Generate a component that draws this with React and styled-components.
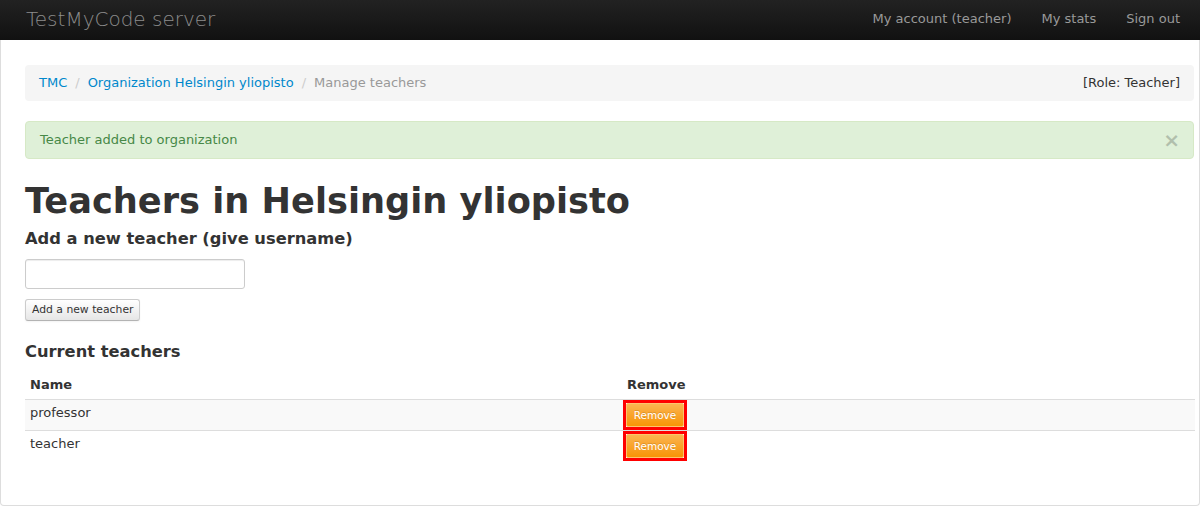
import styled, { createGlobalStyle } from "styled-components";

const GlobalStyle = createGlobalStyle`
    html, body {
        margin: 0;
        padding: 0;
        background: #fff;
    }
    body {
        font-family: "DejaVu Sans", "Liberation Sans", sans-serif;
        font-size: 13px;
        line-height: 18px;
        color: #333;
    }
`;

const NavBar = styled.div`
    height: 40px;
    box-sizing: border-box;
    padding: 0 20px 2px 26px;
    background: linear-gradient(to bottom, #222, #111);
    display: flex;
    align-items: center;
    justify-content: space-between;
`;
const Brand = styled.a`
    font-family: "DejaVu Sans ExtraLight", "DejaVu Sans Light", "DejaVu Sans", sans-serif;
    font-size: 20px;
    font-weight: 200;
    color: #8c8c8c;
    text-decoration: none;
`;
const NavLinks = styled.ul`
    display: flex;
    margin: 0;
    padding: 0;
    list-style: none;
    gap: 30px;
`;
const NavLink = styled.li`
    color: #999;
    font-size: 13px;
`;

const Container = styled.div`
    box-sizing: border-box;
    min-height: 466px;
    border: 1px solid #ddd;
    border-top: none;
    border-radius: 0 0 4px 4px;
    padding: 25px 5px 24px 24px;
`;

const Breadcrumb = styled.div`
    background: #f5f5f5;
    border-radius: 4px;
    padding: 8px 14px;
    line-height: 20px;
    display: flex;
    justify-content: space-between;
    margin-bottom: 20px;
`;
const Crumbs = styled.div`
    display: flex;
`;
const Crumb = styled.span`
    color: ${props => props.active ? "#999" : "#0088cc"};
`;
const Divider = styled.span`
    color: #ccc;
    padding: 0 8px;
`;
const Role = styled.span`
    color: #333;
`;

const Alert = styled.div`
    background: #dff0d8;
    border: 1px solid #d6e9c6;
    border-radius: 4px;
    color: #468847;
    padding: 8px 14px;
    line-height: 20px;
    display: flex;
    justify-content: space-between;
    align-items: center;
    margin-bottom: 17px;
`;
const Close = styled.span`
    color: #000;
    opacity: 0.2;
    font-size: 20px;
    font-weight: bold;
    line-height: 18px;
    margin-right: -1px;
`;

const Title = styled.h1`
    font-size: 35.2px;
    font-weight: bold;
    line-height: 50px;
    margin: 0 0 3px;
`;
const SubTitle = styled.h3`
    font-size: 16.3px;
    font-weight: bold;
    line-height: 20px;
    margin: ${props => props.margin};
`;
const Input = styled.input`
    display: block;
    box-sizing: border-box;
    width: 220px;
    height: 30px;
    border: 1px solid #ccc;
    border-radius: 3px;
    box-shadow: inset 0 1px 1px rgba(0, 0, 0, 0.075);
    margin: 0 0 10px;
`;
const Button = styled.button`
    display: block;
    font-family: "DejaVu Sans", sans-serif;
    font-size: 10.8px;
    line-height: 14px;
    color: #333;
    padding: 3px 6px;
    border: 1px solid #ccc;
    border-bottom-color: #b3b3b3;
    border-radius: 3px;
    background: linear-gradient(to bottom, #fff, #e6e6e6);
    box-shadow: inset 0 1px 0 rgba(255,255,255,.2), 0 1px 2px rgba(0,0,0,.05);
`;

const Table = styled.table`
    width: 1170px;
    margin-top: 11px;
    border-collapse: collapse;
    border-spacing: 0;
`;
const Th = styled.th`
    text-align: left;
    font-weight: bold;
    padding: 3px 5px 5px;
    line-height: 18px;
    width: ${props => props.w || "auto"};
`;
const Row = styled.tr`
    background: ${props => props.striped ? "#f9f9f9" : "transparent"};
    border-top: 1px solid #ddd;
`;
const Td = styled.td`
    padding: 4px 5px 8px;
    line-height: 18px;
    vertical-align: top;
`;
const RemoveFrame = styled.div`
    display: inline-block;
    vertical-align: top;
    border: 3px solid #ff0000;
    margin: -4px 0 -8px -4px;
`;
const RemoveButton = styled.button`
    display: block;
    box-sizing: border-box;
    width: 58px;
    height: 24px;
    font-family: "DejaVu Sans", sans-serif;
    font-size: 10.5px;
    line-height: 14px;
    color: #fff;
    padding: 0;
    border: 1px solid #fcc46e;
    border-radius: 2px;
    background: linear-gradient(to bottom, #fbb450, #f89406);
    text-shadow: 0 -1px 0 rgba(0,0,0,.15);
`;

const teachers = ["professor", "teacher"];

const App = () => {
    return (
        <>
            <GlobalStyle />
            <NavBar>
                <Brand>TestMyCode server</Brand>
                <NavLinks>
                    <NavLink>My account (teacher)</NavLink>
                    <NavLink>My stats</NavLink>
                    <NavLink>Sign out</NavLink>
                </NavLinks>
            </NavBar>
            <Container>
                <Breadcrumb>
                    <Crumbs>
                        <Crumb>TMC</Crumb>
                        <Divider>/</Divider>
                        <Crumb>Organization Helsingin yliopisto</Crumb>
                        <Divider>/</Divider>
                        <Crumb active>Manage teachers</Crumb>
                    </Crumbs>
                    <Role>[Role: Teacher]</Role>
                </Breadcrumb>
                <Alert>
                    <span>Teacher added to organization</span>
                    <Close>×</Close>
                </Alert>
                <Title>Teachers in Helsingin yliopisto</Title>
                <SubTitle margin="0 0 10px">Add a new teacher (give username)</SubTitle>
                <Input type="text" />
                <Button>Add a new teacher</Button>
                <SubTitle margin="21px 0 0">Current teachers</SubTitle>
                <Table>
                    <thead>
                        <tr>
                            <Th w="587px">Name</Th>
                            <Th>Remove</Th>
                        </tr>
                    </thead>
                    <tbody>
                        {teachers.map((t, i) => (
                            <Row key={t} striped={i % 2 === 0}>
                                <Td>{t}</Td>
                                <Td>
                                    <RemoveFrame>
                                        <RemoveButton>Remove</RemoveButton>
                                    </RemoveFrame>
                                </Td>
                            </Row>
                        ))}
                    </tbody>
                </Table>
            </Container>
        </>
    );
};

export default App;
